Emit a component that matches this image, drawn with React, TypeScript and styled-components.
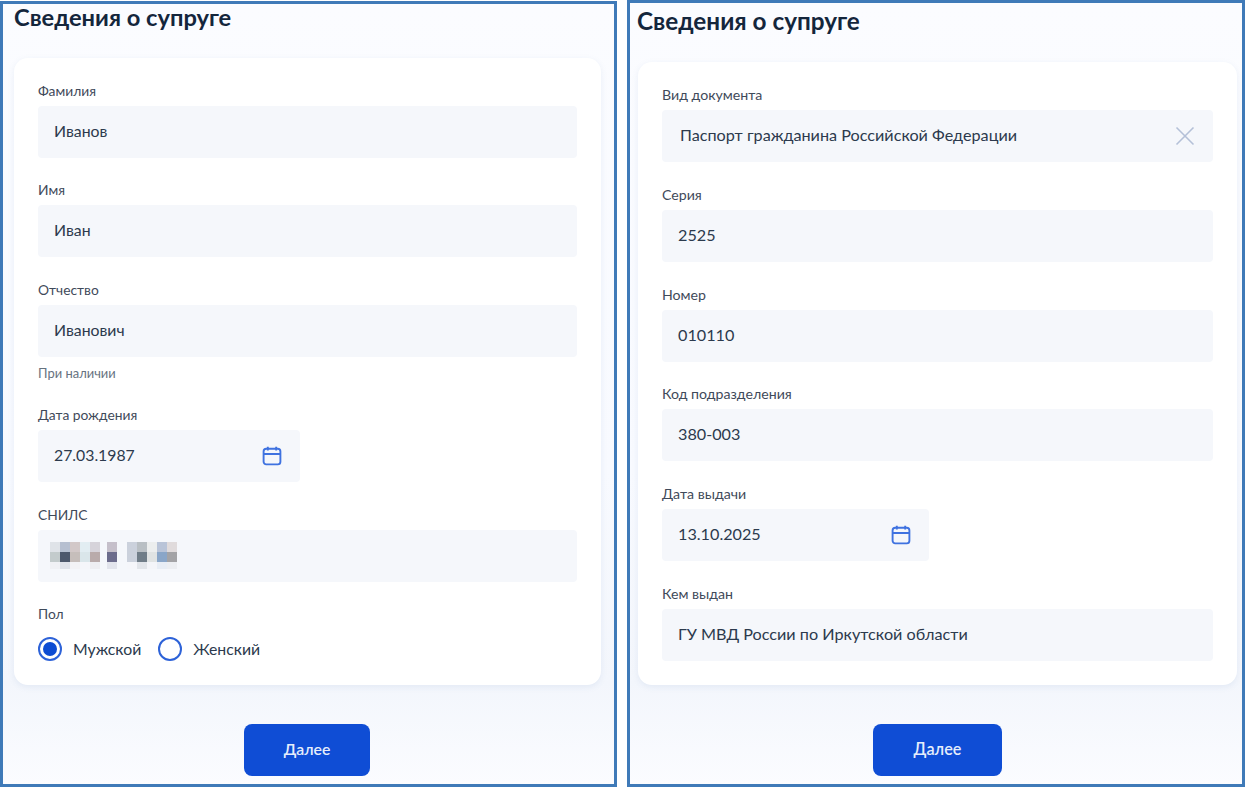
import React from 'react';
import styled, { createGlobalStyle } from 'styled-components';

const GlobalStyle = createGlobalStyle`
  html, body {
    margin: 0;
    padding: 0;
    background: #fff;
  }
  body {
    font-family: Lato, 'Noto Sans', 'Liberation Sans', sans-serif;
    color: #2c3a4d;
  }
`;

interface IField {
  label: string;
  value?: string;
  hint?: string;
  kind?: 'date' | 'clear' | 'hidden';
}

const spouseFields: IField[] = [
  { label: 'Фамилия', value: 'Иванов' },
  { label: 'Имя', value: 'Иван' },
  { label: 'Отчество', value: 'Иванович', hint: 'При наличии' },
  { label: 'Дата рождения', value: '27.03.1987', kind: 'date' },
  { label: 'СНИЛС', kind: 'hidden' },
];

const documentFields: IField[] = [
  { label: 'Вид документа', value: 'Паспорт гражданина Российской Федерации', kind: 'clear' },
  { label: 'Серия', value: '2525' },
  { label: 'Номер', value: '010110' },
  { label: 'Код подразделения', value: '380-003' },
  { label: 'Дата выдачи', value: '13.10.2025', kind: 'date' },
  { label: 'Кем выдан', value: 'ГУ МВД России по Иркутской области' },
];

// blurred snils, column x / colours from top row to bottom row
const mosaic: [number, string[]][] = [
  [0, ['#dfe3e8', '#c3cbcc', '#f0f1f5']],
  [10, ['#b6bfd0', '#4d586c', '#dfe2ea']],
  [20, ['#d2c8c8', '#c6bebb', '#f3f3f6']],
  [30, ['#e2edf2', '#dae6ea', '#f5f6fa']],
  [40, ['#d6d3da', '#b9abab', '#eeeef2']],
  [57, ['#c5bfca', '#6c6c8c', '#e2e4ec']],
  [77, ['#cbd1dc', '#cbd1dc', '#f5f6fa']],
  [87, ['#b9bfc4', '#6f7d88', '#e2e5ea']],
  [97, ['#eceeee', '#e0e3e3', '#f4f5f9']],
  [107, ['#b9c4d8', '#8aa6c8', '#e8edf5']],
  [117, ['#e0dbdc', '#a3a3a6', '#eceef2']],
];

const CalendarIcon = () => (
  <svg width='20' height='20' viewBox='0 0 20 20' fill='none' stroke='#3f72e0' strokeWidth='1.9'>
    <rect x='1.6' y='2.8' width='16.8' height='15.6' rx='2.6' />
    <path d='M1.6 8h16.8M5.8 0.8v3.6M14.2 0.8v3.6' />
  </svg>
);

const ClearIcon = () => (
  <svg width='20' height='20' viewBox='0 0 20 20' fill='none' stroke='#b4c0d8' strokeWidth='1.6'>
    <path d='M1.5 1.5l17 17M18.5 1.5l-17 17' />
  </svg>
);

const HiddenValue = () => (
  <Mosaic width='127' height='27' viewBox='0 0 127 27'>
    <defs>
      <filter id='soft'>
        <feGaussianBlur stdDeviation='0.5' />
      </filter>
    </defs>
    <g filter='url(#soft)'>
      {mosaic.map(([x, colors]) =>
        colors.map((color, row) => (
          <rect key={`${x}_${row}`} x={x} y={row * 10} width='10' height={row === 2 ? 7 : 10} fill={color} />
        )),
      )}
    </g>
  </Mosaic>
);

const FieldRow = ({ label, value, hint, kind, dateWidth }: IField & { dateWidth: number }) => (
  <Field>
    <Label>{label}</Label>
    <InputBox boxWidth={kind === 'date' ? dateWidth : undefined} select={kind === 'clear'}>
      {kind === 'hidden' ? <HiddenValue /> : <Value>{value}</Value>}
      {kind === 'date' && <CalendarIcon />}
      {kind === 'clear' && <ClearIcon />}
    </InputBox>
    {hint && <Hint>{hint}</Hint>}
  </Field>
);

export default function App() {
  return (
    <>
      <GlobalStyle />
      <Page>
        <LeftPanel>
          <LeftTitle>Сведения о супруге</LeftTitle>
          <LeftCard>
            {spouseFields.map((field) => (
              <FieldRow key={field.label} dateWidth={262} {...field} />
            ))}
            <Field>
              <Label>Пол</Label>
              <RadioGroup>
                <RadioLabel>
                  <Radio checked />
                  Мужской
                </RadioLabel>
                <RadioLabel>
                  <Radio />
                  Женский
                </RadioLabel>
              </RadioGroup>
            </Field>
          </LeftCard>
          <NextButton type='button' wide={126} offset={230}>
            Далее
          </NextButton>
        </LeftPanel>
        <RightPanel>
          <RightTitle>Сведения о супруге</RightTitle>
          <RightCard>
            {documentFields.map((field) => (
              <FieldRow key={field.label} dateWidth={267} {...field} />
            ))}
          </RightCard>
          <NextButton type='button' wide={129} offset={235}>
            Далее
          </NextButton>
        </RightPanel>
      </Page>
    </>
  );
}

const Page = styled.div`
  display: flex;
  justify-content: space-between;
  width: 1245px;
  height: 787px;
  overflow: hidden;
`;
const Panel = styled.section`
  box-sizing: border-box;
  display: flex;
  flex-direction: column;
  align-items: stretch;
  border: 3px solid #3f7ab8;
  background: linear-gradient(180deg, #fbfcff 0%, #f8faff 60%, #f3f6fc 87%, #fbfcff 100%);
`;
const LeftPanel = styled(Panel)`
  width: 617px;
  height: 786px;
  margin-top: 1px;
  padding: 0 13px 0 11px;
  font-size: 15.8px;
`;
const RightPanel = styled(Panel)`
  width: 618px;
  height: 787px;
  padding: 0 5px 0 8px;
  font-size: 16.2px;
`;
const Title = styled.h1`
  height: 34px;
  font-size: 1.5em;
  line-height: 30px;
  font-weight: 700;
  color: #14263c;
`;
const LeftTitle = styled(Title)`
  margin: -2px 0 0;
`;
const RightTitle = styled(Title)`
  margin: 3px 0 0 -1px;
`;
const Card = styled.div`
  box-sizing: border-box;
  display: flex;
  flex-direction: column;
  padding: 23px 24px 0;
  background: #fff;
  border-radius: 14px;
  box-shadow: 0 2px 6px rgba(110, 140, 190, 0.12);
`;
const LeftCard = styled(Card)`
  height: 627px;
  margin-top: 22px;
  gap: 22.3px;
`;
const RightCard = styled(Card)`
  height: 623px;
  margin-top: 22px;
  gap: 22.8px;
`;
const Field = styled.div`
  display: flex;
  flex-direction: column;
  align-items: flex-start;
`;
const Label = styled.div`
  height: 20px;
  margin-bottom: 5px;
  font-size: 0.875em;
  line-height: 20px;
  color: #3f4a5a;
`;
const InputBox = styled.div<{ boxWidth?: number; select?: boolean }>`
  box-sizing: border-box;
  display: flex;
  align-items: center;
  justify-content: ${({ boxWidth, select }) => (boxWidth || select ? 'space-between' : 'flex-start')};
  width: ${({ boxWidth }) => (boxWidth ? `${boxWidth}px` : '100%')};
  height: 52px;
  padding: 0 18px 0 ${({ select }) => (select ? 18 : 16)}px;
  background: #f5f7fb;
  border-radius: 4px;
`;
const Value = styled.span`
  padding-bottom: 2px;
  font-size: 1em;
  line-height: 24px;
  color: #2c3a4d;
`;
const Mosaic = styled.svg`
  margin-left: -4px;
`;
const Hint = styled.div`
  margin-top: 6.5px;
  font-size: 0.82em;
  line-height: 20px;
  color: #66727f;
`;
const RadioGroup = styled.div`
  display: flex;
  gap: 17px;
  margin-top: 8px;
`;
const RadioLabel = styled.label`
  display: flex;
  align-items: center;
  gap: 11px;
  padding-bottom: 1px;
  font-size: 1em;
  line-height: 24px;
  color: #2c3a4d;
`;
const Radio = styled.span<{ checked?: boolean }>`
  box-sizing: border-box;
  display: block;
  width: 24px;
  height: 24px;
  border: 2px solid #2d62d8;
  border-radius: 50%;
  background: ${({ checked }) => (checked ? '#0d4cd3' : 'transparent')};
  background-clip: content-box;
  padding: 3px;
`;
const NextButton = styled.button<{ wide: number; offset: number }>`
  display: block;
  width: ${({ wide }) => wide}px;
  height: 52px;
  margin: 39px 0 0 ${({ offset }) => offset}px;
  padding: 0 0 3px;
  border: 0;
  border-radius: 8px;
  background: #0f4dd5;
  color: #e6edfb;
  font-family: inherit;
  font-size: 1em;
  font-weight: 600;
`;
